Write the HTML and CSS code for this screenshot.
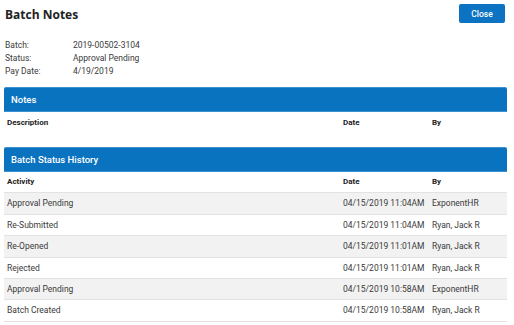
FILE: index.html
```html
<!DOCTYPE html>
<html>
<head>
<meta charset="utf-8">
<link rel="stylesheet" href="styles.css">
</head>
<body>
<div class="page">
  <div class="top">
    <h1 class="title">Batch Notes</h1>
    <button class="btn">Close</button>
  </div>
  <div class="meta">
    <div class="lbl">Batch:</div><div class="val">2019-00502-3104</div>
    <div class="lbl">Status:</div><div class="val">Approval Pending</div>
    <div class="lbl">Pay Date:</div><div class="val">4/19/2019</div>
  </div>

  <div class="section notes">
    <div class="bar">Notes</div>
    <div class="row head">
      <div class="c1">Description</div><div class="c2">Date</div><div class="c3">By</div>
    </div>
  </div>

  <div class="section history">
    <div class="bar">Batch Status History</div>
    <div class="row head line">
      <div class="c1">Activity</div><div class="c2">Date</div><div class="c3">By</div>
    </div>
    <div class="row line alt"><div class="c1">Approval Pending</div><div class="c2">04/15/2019 11:04AM</div><div class="c3">ExponentHR</div></div>
    <div class="row line"><div class="c1">Re-Submitted</div><div class="c2">04/15/2019 11:04AM</div><div class="c3">Ryan, Jack R</div></div>
    <div class="row line alt"><div class="c1">Re-Opened</div><div class="c2">04/15/2019 11:01AM</div><div class="c3">Ryan, Jack R</div></div>
    <div class="row line"><div class="c1">Rejected</div><div class="c2">04/15/2019 11:01AM</div><div class="c3">Ryan, Jack R</div></div>
    <div class="row line alt"><div class="c1">Approval Pending</div><div class="c2">04/15/2019 10:58AM</div><div class="c3">ExponentHR</div></div>
    <div class="row line"><div class="c1">Batch Created</div><div class="c2">04/15/2019 10:58AM</div><div class="c3">Ryan, Jack R</div></div>
  </div>
</div>
</body>
</html>
```
FILE: styles.css
```css
html, body {
  margin: 0;
  padding: 0;
  background: #fff;
}
body {
  font-family: Roboto, "Liberation Sans", sans-serif;
  font-size: 8.5px;
  color: #3a3a3a;
}
.page {
  width: 503px;
  padding: 4px 7px 0 4px;
}
.top {
  display: flex;
  justify-content: space-between;
  align-items: flex-start;
  height: 19px;
}
.title {
  margin: 3px 0 0 1px;
  font-family: "Open Sans", "Liberation Sans", sans-serif;
  font-weight: 700;
  font-size: 12px;
  line-height: 16px;
  color: #222;
}
.btn {
  width: 46px;
  height: 19px;
  margin: 0 2px 0 0;
  padding: 0;
  border: none;
  border-radius: 2px;
  background: #0b73c2;
  color: #fff;
  font-family: Roboto, "Liberation Sans", sans-serif;
  font-size: 8.5px;
  font-weight: 500;
}
.meta {
  display: grid;
  grid-template-columns: 68px auto;
  grid-auto-rows: 13px;
  line-height: 13px;
  margin: 16px 0 0 1px;
}
.bar {
  height: 23px;
  line-height: 23px;
  padding-left: 7px;
  background: #0a73c0;
  border-top: 1px solid #3d90d0;
  border-bottom: 1px solid #3d90d0;
  color: #fff;
  font-size: 9.5px;
  font-weight: 500;
  border-radius: 2px 2px 0 0;
}
.section {
  width: 503px;
}
.notes {
  margin-top: 9px;
}
.history {
  margin-top: 13px;
}
.row {
  display: flex;
  height: 21px;
  line-height: 21px;
}
.row.line {
  border-bottom: 1px solid #e2e2e2;
  height: 20.4px;
  line-height: 20.4px;
}
.row.alt {
  background: #f2f2f2;
}
.head {
  font-weight: 700;
  color: #222;
  font-size: 8px;
}
.notes .head {
  height: 22px;
  line-height: 22px;
}
.c1 {
  width: 336px;
  padding-left: 3px;
}
.c2 {
  width: 89px;
}
.c3 {
  flex: 1;
}
```
